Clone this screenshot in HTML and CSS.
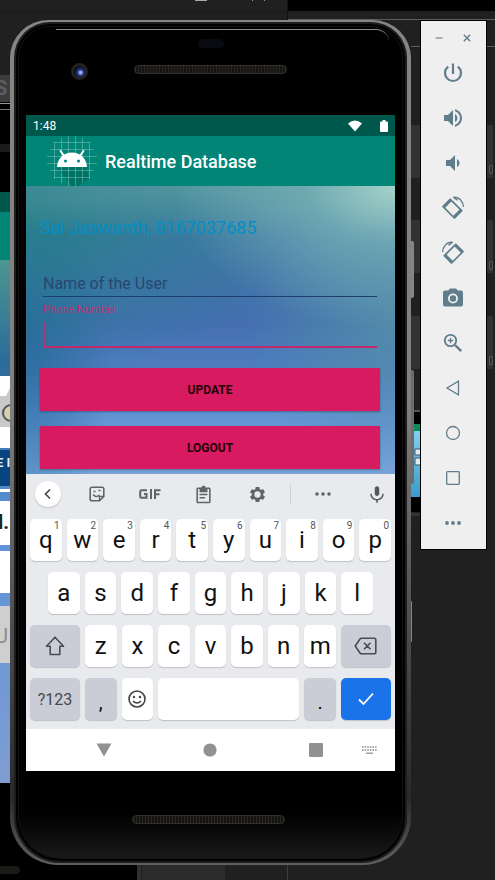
FILE: index.html
```html
<!DOCTYPE html>
<html lang="en">
<head>
<meta charset="utf-8">
<meta name="viewport" content="width=device-width, initial-scale=1">
<title>Realtime Database</title>
<link rel="stylesheet" href="styles.css">
</head>
<body>
<div class="desktop">
  <svg class="backdrop" viewBox="0 0 495 880" preserveAspectRatio="xMidYMid slice" aria-hidden="true">
    <defs>
      <linearGradient id="wall" x1="0" y1="0" x2="0" y2="1">
        <stop offset="0" stop-color="#4d9690"/><stop offset=".2" stop-color="#2c6a9a"/><stop offset=".5" stop-color="#5c92d8"/><stop offset="1" stop-color="#7f9dd2"/>
      </linearGradient>
      <linearGradient id="sky" x1="0" y1="0" x2="0" y2="1">
        <stop offset="0" stop-color="#7fd0ec"/><stop offset="1" stop-color="#3a9ccb"/>
      </linearGradient>
    </defs>
    <rect width="495" height="880" fill="#202020"/>
    <rect y="12" width="287" height="1" fill="#191919"/>
    <rect x="195" width="12" height="1" fill="#aaa"/>
    <path d="M252 1l1-1M264 0l1 1" stroke="#999"/>
    <rect x="288" width="207" height="11" fill="#000"/>
    <rect x="287" y="0" width="1" height="20" fill="#111"/>
    <path d="M288 19.500H495M411 46.500H421M486 46.500H495" stroke="#5e5e5e"/>
    <!-- second device at the left edge -->
    <rect y="75" width="14" height="27" fill="#3a3c3e"/>
    <text x="-5" y="95" font-size="20" font-weight="700" fill="#5a5f64">S</text>
    <rect y="102" width="14" height="90" fill="#000"/>
    <rect y="103" width="14" height="1" fill="#999"/><rect y="109" width="14" height="1" fill="#777"/>
    <rect y="144" width="14" height="8" fill="#1c1c1c"/>
    <rect y="192" width="14" height="21" fill="#00574b"/>
    <rect y="212" width="14" height="48" fill="#008577"/>
    <rect y="260" width="14" height="523" fill="url(#wall)"/>
    <rect y="376" width="14" height="72" fill="#fff"/>
    <path d="M0 396h6l4-8v39H0z" fill="#c9c9c9"/>
    <circle cx="11" cy="413" r="8" fill="#d8cfae" stroke="#555" stroke-width="2"/>
    <rect y="450" width="14" height="36" fill="#08447f"/>
    <text x="-4" y="467" font-size="13" font-weight="700" fill="#e8eef5">E I</text>
    <rect y="489" width="14" height="3" fill="#fff"/>
    <rect y="501" width="14" height="44" fill="#fff"/>
    <text x="-2" y="529" font-size="20" font-weight="700" fill="#222">l.</text>
    <rect y="551" width="14" height="42" fill="#fff"/>
    <rect y="606" width="14" height="57" fill="#cfcfcf"/>
    <text x="-5" y="643" font-size="20" fill="#8a8a8a">U</text>
    <rect y="783" width="14" height="97" fill="#000"/>
    <rect y="864" width="140" height="16" fill="#000"/>
    <path d="M0 820H50V870H0z" fill="#000"/>
    <rect x="-8" y="866" width="28" height="8" rx="4" fill="#1c1a17"/>
    <rect x="137" y="860" width="4" height="20" fill="#2f2f2f"/>
    <rect x="142" y="860" width="83" height="20" fill="#2b2b2b"/>
    <rect x="287" y="860" width="1" height="20" fill="#3c3c3c"/>
    <!-- windows peeking out at the right -->
    <g fill="#303234">
      <rect x="411" y="125" width="10" height="53"/><rect x="411" y="220" width="10" height="53"/><rect x="411" y="316" width="10" height="53"/>
      <rect x="486" y="125" width="7" height="53"/><rect x="486" y="220" width="7" height="53"/><rect x="486" y="316" width="7" height="53"/>
    </g>
    <path d="M489.500 165.500h3v8h-3zM489.500 261.500h3v8h-3zM489.500 356.500h3v8h-3z" fill="none" stroke="#555"/>
    <rect x="411" y="410" width="10" height="2" fill="#555"/>
    <rect x="411" y="412" width="10" height="100" fill="#000"/>
    <rect x="411" y="424" width="10" height="7" fill="#0b8a5c"/>
    <rect x="411" y="431" width="10" height="66" fill="url(#sky)"/>
    <path d="M415 449h6v6h-6zM415 458h6v7h-6z" fill="#dcebf2" stroke="#456"/>
    <rect x="411" y="513" width="10" height="3" fill="#333"/>
  </svg>

  <main class="phone">
    <span class="side-button side-power"></span>
    <span class="side-button side-volume"></span>
    <span class="side-button side-trim"></span>
    <div class="glass">
      <div class="bezel bezel-top">
        <span class="sensor"></span>
        <span class="camera"></span>
        <span class="speaker"></span>
      </div>

      <div class="screen">
        <div class="status-bar">
          <span>1:48</span>
          <span class="status-icons">
            <svg width="14" height="12" viewBox="0 0 14 12"><path d="M0 3.500Q7-2.500 14 3.500L7 11.500z" fill="#fff"/></svg>
            <svg width="8" height="12" viewBox="0 0 8 12"><path d="M2.500 0h3v1.500H7q1 0 1 1V11q0 1-1 1H1q-1 0-1-1V2.500q0-1 1-1h1.500z" fill="#fff"/></svg>
          </span>
        </div>
        <header class="app-bar">
          <svg class="app-logo" width="50" height="52" viewBox="0 0 50 52" aria-hidden="true">
            <path d="M10 33L25 51H32L42 43 39 31z" fill="#00695c" opacity=".7"/>
            <path d="M7.500 7v37M14.500 3v45M21.500 1v50M28.500 1v50M35.500 3v45M42.500 7v37M7 7.500h36M3 14.500h44M0 21.500h50M0 28.500h50M3 35.500h44M7 42.500h36" stroke="#8fd0c6" stroke-opacity=".45" fill="none"/>
            <path d="M10 32C10.500 23 17 17.500 25 17.500S39.500 23 40 32z" fill="#fff"/>
            <path d="M13.500 16l4 5.500M36.500 16l-4 5.500" stroke="#fff" stroke-width="2" stroke-linecap="round"/>
            <circle cx="18.500" cy="26" r="1.500" fill="#008577"/><circle cx="31.500" cy="26" r="1.500" fill="#008577"/>
          </svg>
          <h1>Realtime Database</h1>
        </header>

        <form class="content">
          <p class="user">Sai Jaswanth, 8167037685</p>
          <input class="field" type="text" placeholder="Name of the User" aria-label="Name of the User">
          <div class="phone-field">
            <label for="phone">Phone Number</label>
            <input class="field" id="phone" type="tel">
          </div>
          <button class="action" type="button">UPDATE</button>
          <button class="action" type="button">LOGOUT</button>
        </form>

        <section class="keyboard" aria-label="Keyboard">
          <div class="strip">
            <button class="round" type="button" aria-label="Back"><svg width="10" height="12" viewBox="0 0 10 12"><path d="M7 1.500L2.500 6 7 10.500" fill="none" stroke="#444" stroke-width="1.600"/></svg></button>
            <button type="button" aria-label="Stickers"><svg width="16" height="16" viewBox="0 0 16 16" fill="none" stroke="#606367" stroke-width="1.600"><path d="M10.500 14.800H3q-1.800 0-1.800-1.800V3Q1.200 1.200 3 1.200H13q1.800 0 1.800 1.800V10.500z"/><path d="M10.500 14.500V10.500h4M4 8.500q3 3.500 6.500.5" stroke-width="1.400"/><path d="M4.500 5.500h2M9.500 4.500h2"/></svg></button>
            <button type="button" aria-label="GIF"><svg width="22" height="10" viewBox="0 0 22 10" fill="none" stroke="#606367" stroke-width="2"><path d="M8 1.200H2.500Q1.200 1.200 1.200 2.500V7.500Q1.200 8.800 2.500 8.800H7.500V5H5M12 0V10M16 10V1.200h5.500M16 5.200h4.500"/></svg></button>
            <button type="button" aria-label="Clipboard"><svg width="19" height="19" viewBox="0 0 24 24"><path fill="#606367" d="M7 15h7v2H7zm0-4h10v2H7zm0-4h10v2H7zm12-4h-4.180C14.400 1.840 13.300 1 12 1c-1.300 0-2.400.84-2.820 2H5c-1.100 0-2 .9-2 2v16c0 1.100.9 2 2 2h14c1.100 0 2-.9 2-2V5c0-1.100-.9-2-2-2zm0 18H5V5h2v2h10V5h2v16z"/></svg></button>
            <button type="button" aria-label="Settings"><svg width="19" height="19" viewBox="0 0 24 24"><path fill="#606367" fill-rule="evenodd" d="M19.140 12.940c.04-.3.060-.610.060-.940 0-.320-.020-.640-.070-.940l2.030-1.580c.18-.14.230-.41.120-.61l-1.920-3.320c-.12-.22-.37-.29-.59-.22l-2.390.96c-.5-.38-1.030-.7-1.620-.94l-.36-2.540c-.04-.24-.24-.41-.48-.41h-3.840c-.24 0-.43.17-.47.41l-.36 2.540c-.59.24-1.130.57-1.620.94l-2.390-.96c-.22-.08-.47 0-.59.22L2.740 8.870c-.12.21-.08.47.12.61l2.030 1.580c-.05.3-.09.630-.09.940s.02.640.07.940l-2.030 1.580c-.18.14-.23.41-.12.61l1.920 3.320c.12.220.37.290.59.220l2.390-.96c.5.380 1.030.7 1.620.94l.36 2.540c.05.240.24.410.48.410h3.840c.24 0 .44-.17.47-.41l.36-2.540c.59-.24 1.130-.56 1.620-.94l2.390.96c.22.080.47 0 .59-.22l1.920-3.320c.12-.22.070-.47-.12-.61l-2.010-1.580zM12 16a4 4 0 1 1 0-8 4 4 0 0 1 0 8z"/></svg></button>
            <span class="divider"></span>
            <button type="button" aria-label="More"><svg width="16" height="4" viewBox="0 0 16 4" fill="#606367"><circle cx="2" cy="2" r="1.800"/><circle cx="8" cy="2" r="1.800"/><circle cx="14" cy="2" r="1.800"/></svg></button>
            <button class="mic" type="button" aria-label="Voice input"><svg width="18" height="19" viewBox="0 0 24 24"><path fill="#54575c" d="M12 14c1.660 0 3-1.340 3-3V4c0-1.660-1.340-3-3-3S9 2.340 9 4v7c0 1.660 1.340 3 3 3zm7-3c0 3.870-3.130 7-7 7s-7-3.130-7-7H3c0 4.500 3.300 8.200 8 8.900V23h2v-3.100c4.700-.7 8-4.400 8-8.900z"/></svg></button>
          </div>
          <div class="keys">
            <div class="row row-ten">
              <button class="key" type="button">q<sup>1</sup></button><button class="key" type="button">w<sup>2</sup></button><button class="key" type="button">e<sup>3</sup></button><button class="key" type="button">r<sup>4</sup></button><button class="key" type="button">t<sup>5</sup></button><button class="key" type="button">y<sup>6</sup></button><button class="key" type="button">u<sup>7</sup></button><button class="key" type="button">i<sup>8</sup></button><button class="key" type="button">o<sup>9</sup></button><button class="key" type="button">p<sup>0</sup></button>
            </div>
            <div class="row row-nine">
              <button class="key" type="button">a</button><button class="key" type="button">s</button><button class="key" type="button">d</button><button class="key" type="button">f</button><button class="key" type="button">g</button><button class="key" type="button">h</button><button class="key" type="button">j</button><button class="key" type="button">k</button><button class="key" type="button">l</button>
            </div>
            <div class="row row-wide">
              <button class="key gray" type="button" aria-label="Shift"><svg width="20" height="20" viewBox="0 0 20 20"><path d="M10 1.200L18.500 10.300H14.800V18.500H5.200V10.300H1.500z" fill="none" stroke="#484b55" stroke-width="1.600" stroke-linejoin="round"/></svg></button>
              <button class="key" type="button">z</button><button class="key" type="button">x</button><button class="key" type="button">c</button><button class="key" type="button">v</button><button class="key" type="button">b</button><button class="key" type="button">n</button><button class="key" type="button">m</button>
              <button class="key gray" type="button" aria-label="Backspace"><svg width="23" height="18" viewBox="0 0 23 18"><path d="M7.500 1.200H20q1.800 0 1.800 1.800V15q0 1.800-1.800 1.800H7.500Q6.500 16.800 6 16L1.200 9 6 2Q6.500 1.200 7.500 1.200zM10 5.800l6.500 6.500M16.500 5.800L10 12.300" fill="none" stroke="#484b55" stroke-width="1.600"/></svg></button>
            </div>
            <div class="row row-wide">
              <button class="key gray symbols" type="button">?123</button>
              <button class="key gray mark" type="button">,</button>
              <button class="key" type="button" aria-label="Emoji"><svg width="18" height="18" viewBox="0 0 18 18"><circle cx="9" cy="9" r="8" fill="none" stroke="#444" stroke-width="1.600"/><circle cx="6" cy="7" r="1.200" fill="#444"/><circle cx="12" cy="7" r="1.200" fill="#444"/><path d="M5 11q4 4 8 0" fill="none" stroke="#444" stroke-width="1.500"/></svg></button>
              <button class="key space" type="button" aria-label="Space"></button>
              <button class="key gray mark" type="button">.</button>
              <button class="key enter" type="button" aria-label="Done"><svg width="16" height="14" viewBox="0 0 16 14"><path d="M1 7.500L5.500 12 15 1.500" fill="none" stroke="#fff" stroke-width="1.800"/></svg></button>
            </div>
          </div>
        </section>

        <nav class="nav-bar" aria-label="System">
          <button type="button" aria-label="Hide keyboard"><svg width="16" height="14" viewBox="0 0 16 14"><path d="M.5.500h15L8 13.500z" fill="#919191"/></svg></button>
          <button type="button" aria-label="Home"><svg width="14" height="14" viewBox="0 0 14 14"><circle cx="7" cy="7" r="6.600" fill="#919191"/></svg></button>
          <button type="button" aria-label="Recents"><svg width="14" height="14" viewBox="0 0 14 14"><rect width="14" height="14" rx="1" fill="#919191"/></svg></button>
          <button type="button" aria-label="Switch keyboard"><svg width="15" height="8" viewBox="0 0 15 8"><path d="M0 1h15M0 4h15" stroke="#919191" stroke-width="1.300" stroke-dasharray="1.600 1"/><path d="M4 7.200h7" stroke="#919191" stroke-width="1.300"/></svg></button>
        </nav>
      </div>

      <div class="bezel bezel-bottom"><span class="speaker"></span></div>
    </div>
  </main>

  <aside class="tools" aria-label="Emulator controls">
    <div class="window-buttons">
      <button type="button" aria-label="Minimize"><svg width="8" height="8" viewBox="0 0 8 8"><path d="M.5 4h7" stroke="#8b9aa2" stroke-width="1.500"/></svg></button>
      <button type="button" aria-label="Close"><svg width="8" height="8" viewBox="0 0 8 8"><path d="M.8.800l6.400 6.400M7.200.800L.8 7.200" stroke="#607d8b" stroke-width="1.400"/></svg></button>
    </div>
    <button type="button" aria-label="Power"><svg width="20" height="20" viewBox="0 0 20 20" fill="none" stroke="#607d8b" stroke-width="2.200"><path d="M10 .5v10.500M5.200 3.600a8 8 0 1 0 9.600 0"/></svg></button>
    <button type="button" aria-label="Volume up"><svg width="24" height="24" viewBox="0 0 24 24" fill="#607d8b"><path d="M3 9v6h4l5 5V4L7 9H3zm13.500 3c0-1.770-1.020-3.290-2.500-4.030v8.050c1.480-.73 2.500-2.250 2.500-4.020zM14 3.230v2.060c2.890.86 5 3.540 5 6.710s-2.110 5.850-5 6.710v2.060c4.010-.91 7-4.490 7-8.770s-2.990-7.860-7-8.770z"/></svg></button>
    <button type="button" aria-label="Volume down"><svg width="24" height="24" viewBox="0 0 24 24" fill="#607d8b"><path d="M18.500 12c0-1.770-1.020-3.290-2.500-4.030v8.050c1.480-.73 2.500-2.250 2.500-4.020zM5 9v6h4l5 5V4L9 9H5z"/></svg></button>
    <button type="button" aria-label="Rotate left"><svg width="24" height="24" viewBox="0 0 24 24"><g id="turn" fill="none" stroke="#607d8b"><path d="M9.300 3.300L20.700 14.700 13.400 22 2 10.600z" stroke-width="1.700" stroke-linejoin="round"/><path d="M2.600 11.200L9.900 3.900M12.800 21.400L20.100 14.100" stroke-width="3"/><path d="M12.500 1.200q4.500-.3 7.300 3 2.700 3 2.600 6.800" stroke-width="1.300"/><path d="M12.500 1.200l4 3" stroke-width="1.500"/></g></svg></button>
    <button type="button" aria-label="Rotate right"><svg width="24" height="24" viewBox="0 0 24 24"><use href="#turn" transform="matrix(-1 0 0 1 24 0)"/></svg></button>
    <button type="button" aria-label="Screenshot"><svg width="24" height="24" viewBox="0 0 24 24"><path fill="#607d8b" fill-rule="evenodd" d="M9 2.500L7.170 4.500H4c-1.100 0-2 .9-2 2v12c0 1.100.9 2 2 2h16c1.100 0 2-.9 2-2V6.500c0-1.100-.9-2-2-2h-3.170L15 2.500H9zm3 15a5 5 0 1 1 0-10 5 5 0 0 1 0 10zm0-1.800a3.200 3.200 0 1 0 0-6.400 3.200 3.200 0 0 0 0 6.400z"/></svg></button>
    <button type="button" aria-label="Zoom"><svg width="20" height="20" viewBox="0 0 20 20" fill="none" stroke="#607d8b"><circle cx="7.500" cy="7.500" r="5.700" stroke-width="1.800"/><path d="M12 12l6.200 6.200" stroke-width="2.400"/><path d="M7.500 4.800v5.400M4.800 7.500h5.400" stroke-width="1.300"/></svg></button>
    <button type="button" aria-label="Back"><svg width="16" height="16" viewBox="0 0 16 16"><path d="M13.500 1.200V14.800L2 8z" fill="none" stroke="#607d8b" stroke-width="1.300"/></svg></button>
    <button type="button" aria-label="Home"><svg width="16" height="16" viewBox="0 0 16 16"><circle cx="8" cy="8" r="6.500" fill="none" stroke="#607d8b" stroke-width="1.300"/></svg></button>
    <button type="button" aria-label="Overview"><svg width="16" height="16" viewBox="0 0 16 16"><rect x="1.700" y="1.700" width="12.600" height="12.600" rx=".8" fill="none" stroke="#607d8b" stroke-width="1.300"/></svg></button>
    <button type="button" aria-label="More"><svg width="16" height="4" viewBox="0 0 16 4" fill="#607d8b"><circle cx="2" cy="2" r="1.900"/><circle cx="8" cy="2" r="1.900"/><circle cx="14" cy="2" r="1.900"/></svg></button>
  </aside>
</div>
</body>
</html>
```
FILE: styles.css
```css
* {
  box-sizing: border-box;
}

body {
  margin: 0;
  background: #202020;
  font-family: Roboto, "Liberation Sans", sans-serif;
}

button,
input {
  margin: 0;
  padding: 0;
  border: 0;
  background: none;
  font: inherit;
  color: inherit;
}

svg {
  display: block;
}

.desktop {
  position: relative;
  display: flex;
  align-items: flex-start;
  gap: 10px;
  min-height: 100vh;
  padding: 20px 9px 15px 10px;
  overflow: hidden;
}

.backdrop {
  position: absolute;
  inset: 0;
  width: 100%;
  height: 100%;
  font-family: Roboto, sans-serif;
}

/* Phone body */
.phone {
  position: relative;
  flex: 1;
  min-width: 0;
  padding: 2px 4px;
  border-radius: 38px 38px 48px 48px;
  background: linear-gradient(#858585, #808080 45%, #5a5a5a 65%, #2a2a2a 92%, #606060);
}

.glass {
  padding: 0 12px;
  border-radius: 36px 36px 46px 46px;
  background: linear-gradient(transparent 94%, #1c1c1c), #000;
  box-shadow: inset 0 0 0 2px #1d1d1d, inset 0 0 0 4px #000, inset 0 0 0 5px #121212;
}

.side-button {
  position: absolute;
  left: 100%;
  width: 3px;
  border-radius: 0 2px 2px 0;
  background: #858585;
}

.side-power {
  top: 221px;
  height: 57px;
}

.side-volume {
  top: 350px;
  height: 114px;
  background: #6c6c6c;
}

.side-trim {
  top: 581px;
  width: 1px;
  height: 41px;
}

.bezel {
  position: relative;
  display: flex;
  justify-content: center;
}

.bezel-top {
  height: 93px;
  padding-top: 43px;
}

.bezel-top::before {
  content: "";
  position: absolute;
  inset: 7px 6px auto 30px;
  height: 12px;
  border-top: 1px solid #8d8d8d;
  border-radius: 0 20px 0 0;
}

.bezel-bottom {
  height: 92px;
  padding-top: 44px;
}

.speaker {
  width: 153px;
  height: 9px;
  border: 1px solid #33312c;
  border-radius: 5px;
  background: repeating-linear-gradient(90deg, #292722 0 1px, #151412 1px 3px);
}

.bezel-bottom .speaker {
  margin-right: 4px;
}

.sensor {
  position: absolute;
  top: 17px;
  left: 50%;
  width: 26px;
  height: 9px;
  margin-left: -13px;
  border-radius: 5px;
  background: #0a0b10;
}

.camera {
  position: absolute;
  top: 41px;
  left: 45px;
  width: 17px;
  height: 17px;
  border: 3px solid #24221f;
  border-radius: 50%;
  background: radial-gradient(circle at 60% 60%, #a0b0f0 0 1px, #28368c 3px, #0b0d20 6px);
}

/* App */
.screen {
  background: #fff;
}

.status-bar {
  display: flex;
  justify-content: space-between;
  align-items: center;
  height: 21px;
  padding: 0 7px;
  background: #00574b;
  color: #fff;
  font-size: 12px;
}

.status-icons {
  display: flex;
  gap: 18px;
}

.app-bar {
  display: flex;
  align-items: center;
  gap: 8px;
  height: 50px;
  padding-left: 21px;
  background: #008577;
  color: #fff;
}

.app-bar h1 {
  margin: 0;
  font-size: 18px;
  font-weight: 500;
}

.app-logo {
  flex: none;
  overflow: visible;
}

.content {
  display: flex;
  flex-direction: column;
  padding: 31px 15px 5px 14px;
  background:
    radial-gradient(ellipse 60% 50% at 100% 0, #a4d2c9 0, rgba(126, 184, 184, .65) 40%, rgba(90, 150, 170, 0) 100%),
    radial-gradient(ellipse 100% 18% at 50% 0, rgba(100, 165, 160, .6), rgba(70, 140, 150, 0)),
    radial-gradient(ellipse 75% 55% at 0 10%, rgba(38, 128, 136, .9) 0, rgba(40, 124, 145, .5) 50%, rgba(50, 110, 165, 0) 100%),
    radial-gradient(ellipse 24% 75% at 0 50%, rgba(34, 104, 150, .8), rgba(34, 104, 150, 0)),
    radial-gradient(ellipse 40% 50% at 100% 50%, rgba(84, 145, 168, .8), rgba(84, 145, 168, 0)),
    linear-gradient(#4680a4, #4273a9 30%, #446fb0 48%, #4d7cbf 62%, #6293d4 80%, #77a3d8);
}

.user {
  margin: 0 0 31px;
  color: #058ec4;
  font-size: 18px;
  line-height: 22px;
}

.field {
  width: calc(100% - 6px);
  height: 27px;
  margin-left: 3px;
  border-bottom: 1px solid #1d3f70;
  outline: 0;
  color: #1c2f4c;
  font-size: 16px;
}

.field::placeholder {
  color: #284670;
  opacity: 1;
}

.phone-field {
  position: relative;
  display: flex;
  flex-direction: column;
  padding-top: 6px;
  margin-bottom: 20px;
}

.phone-field label {
  margin-left: 3px;
  color: #c12f72;
  font-size: 11px;
  line-height: 14px;
}

.phone-field .field {
  height: 31px;
  border-bottom: 2px solid #c02a6c;
}

.phone-field::after {
  content: "";
  position: absolute;
  left: 3px;
  bottom: 2px;
  width: 2px;
  height: 24px;
  background: #a93a77;
}

.action {
  height: 43px;
  background: #d81b60;
  color: #250008;
  font-size: 12px;
  font-weight: 700;
  box-shadow: 0 1px 2px rgba(0, 0, 0, .3);
}

.action + .action {
  margin-top: 15px;
}

/* On-screen keyboard */
.keyboard {
  background: #e8eaed;
}

.strip {
  display: grid;
  grid-template-columns: 44fr 54fr 52fr 54fr 54fr 12fr 54fr 45fr;
  place-items: center;
  height: 40px;
}

.round {
  display: grid;
  place-items: center;
  width: 26px;
  height: 26px;
  border-radius: 50%;
  background: #fff;
  box-shadow: 0 1px 2px rgba(0, 0, 0, .2);
}

.divider {
  width: 1px;
  height: 20px;
  background: #d0d2d6;
}

.mic {
  justify-self: end;
  padding-right: 9px;
}

.keys {
  display: grid;
  gap: 11px;
  padding: 5px 4px 9px;
}

.row {
  display: grid;
  gap: 5px;
  height: 42px;
}

.row-ten {
  grid-template-columns: repeat(10, minmax(0, 1fr));
}

.row-nine {
  grid-template-columns: repeat(9, minmax(0, 1fr));
  padding: 0 18px;
}

.row-wide {
  grid-template-columns: 50px repeat(7, minmax(0, 1fr)) 50px;
}

.key {
  position: relative;
  display: flex;
  align-items: center;
  justify-content: center;
  border-radius: 5px;
  background: #fff;
  color: #111;
  font-size: 24px;
  box-shadow: 0 1px 1px rgba(0, 0, 0, .18);
}

.key sup {
  position: absolute;
  top: 1px;
  right: 2px;
  color: #555;
  font-size: 10px;
  line-height: 12px;
}

.gray {
  background: #cacdd6;
}

.symbols {
  color: #45484f;
  font-size: 16px;
}

.mark {
  align-items: flex-end;
  padding-bottom: 6px;
  font-size: 20px;
}

.space {
  grid-column: span 4;
}

.enter {
  background: #1a73e8;
}

.nav-bar {
  display: grid;
  grid-template-columns: 51fr 54fr 52fr 54fr 52fr 54fr 52fr;
  place-items: center;
  height: 42px;
}

.nav-bar button:nth-child(1) {
  grid-column: 2;
}

.nav-bar button:nth-child(2) {
  grid-column: 4;
}

.nav-bar button:nth-child(3) {
  grid-column: 6;
}

/* Emulator side panel */
.tools {
  position: relative;
  display: flex;
  flex-direction: column;
  flex: none;
  width: 65px;
  margin-top: 1px;
  padding: 7px 2px 4px 0;
  background: #efefef;
  box-shadow: 0 0 0 1px #000;
}

.tools > button {
  display: grid;
  place-items: center;
  height: 45px;
}

.window-buttons {
  display: flex;
  justify-content: center;
  gap: 20px;
  height: 22px;
  padding-top: 6px;
}

.window-buttons button {
  height: 8px;
}
```
